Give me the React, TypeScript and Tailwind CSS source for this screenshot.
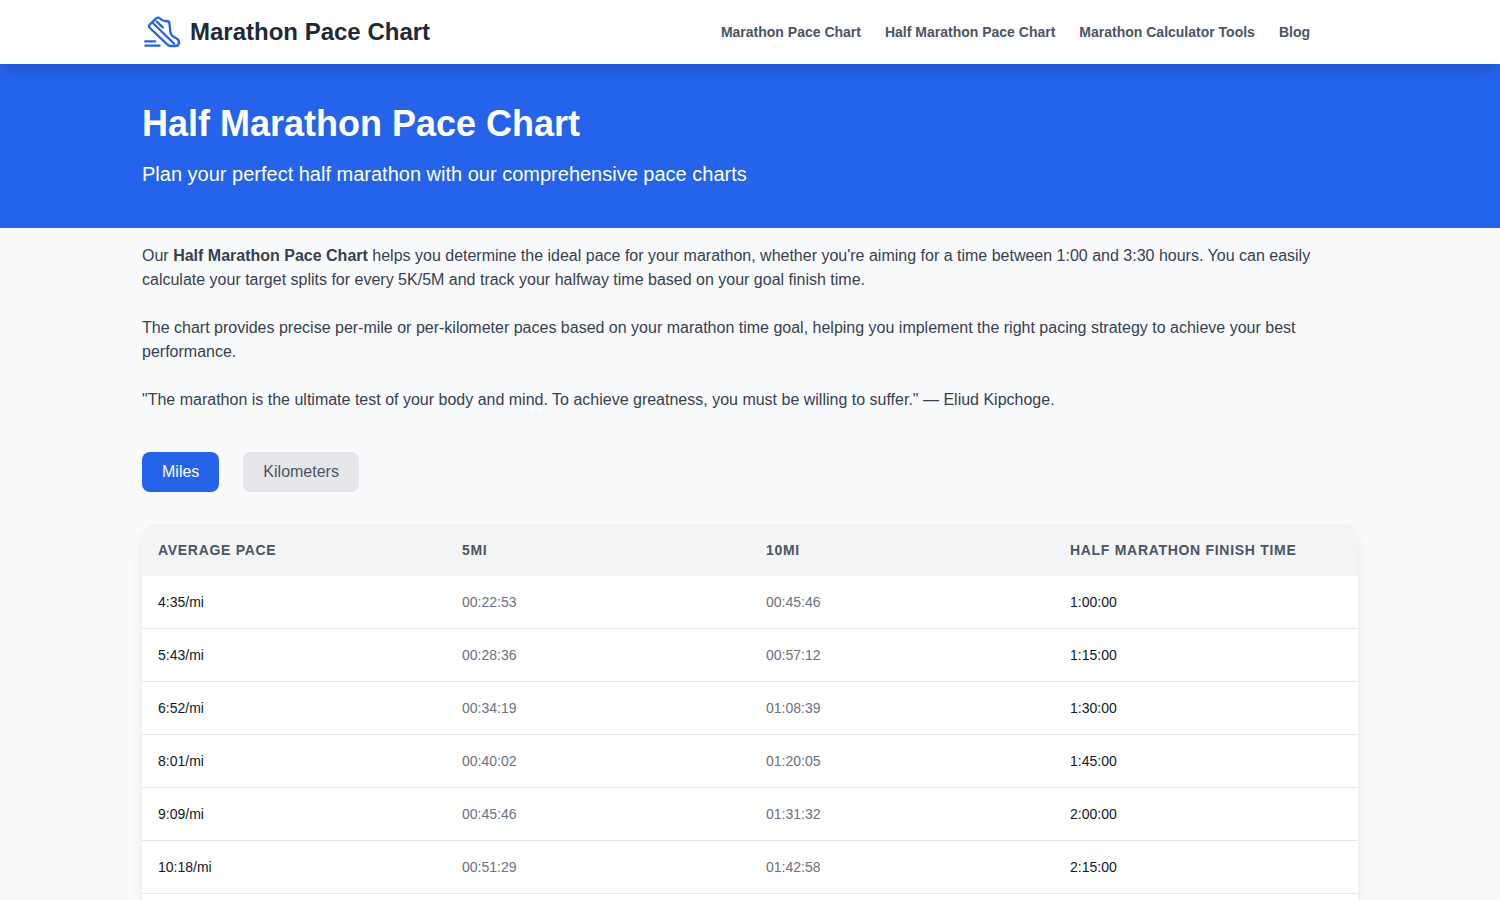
/**
 * Half marathon pace chart page
 *
 * - Site header with logo and navigation
 * - Blue hero banner
 * - Intro copy, unit switch and the pace table
 */

import { useState } from 'react';
import clsx from 'clsx';

type Unit = 'mi' | 'km';

const HALF_MARATHON = { mi: 13.1094, km: 21.0975 };

const SPLITS: Record<Unit, number[]> = {
    mi: [5, 10],
    km: [5, 10, 15, 20],
};

// Goal times from 1:00 to 3:30, one every 15 minutes
const GOAL_MINUTES = [60, 75, 90, 105, 120, 135, 150, 165, 180, 195, 210];

const NAV_LINKS = [
    'Marathon Pace Chart',
    'Half Marathon Pace Chart',
    'Marathon Calculator Tools',
    'Blog',
];

const pad = (n: number) => String(n).padStart(2, '0');

const formatPace = (seconds: number) => {
    const s = Math.round(seconds);
    return `${Math.floor(s / 60)}:${pad(s % 60)}`;
};

const formatSplit = (seconds: number) => {
    const s = Math.floor(seconds);
    return `${pad(Math.floor(s / 3600))}:${pad(Math.floor(s / 60) % 60)}:${pad(s % 60)}`;
};

const formatGoal = (minutes: number) => `${Math.floor(minutes / 60)}:${pad(minutes % 60)}:00`;

const ShoeLogo = () => (
    <svg
        viewBox="0 0 40 40"
        className="h-10 w-10 shrink-0 text-[#2563eb]"
        fill="none"
        stroke="currentColor"
        strokeWidth="2.3"
        strokeLinecap="round"
        strokeLinejoin="round"
        aria-hidden="true"
    >
        {/* Upper and sole */}
        <path d="M7.9 12.4 14.2 6.4C15.4 5.2 17 5.4 18 6.6C19.6 8.5 21.4 9.2 23.8 9C26 8.8 27.3 9.7 27.5 11.8L28.3 19.6C28.6 22 29.8 23.8 31.6 24.8L34.6 26.4C36.4 27.4 37.2 28.8 37 30.8C36.8 32.8 35.3 34 33.2 34H29.4C27.8 34 26.4 33.5 25.2 32.4L7.9 16C6.7 14.9 6.7 13.6 7.9 12.4Z" />
        {/* Midsole and lace */}
        <path d="M10.6 10.8 32.2 31.8" />
        <path d="M14.8 9.6 20.8 15.4" />
        {/* Speed lines */}
        <path d="M3.3 29.4H13.2M3.3 33.6H17.6" />
    </svg>
);

const SiteHeader = () => (
    <header className="relative z-10 bg-white shadow-lg">
        <div className="mx-auto flex h-16 max-w-7xl items-center justify-between px-8">
            <a href="#" className="flex items-center gap-2">
                <ShoeLogo />
                <span className="text-2xl font-bold text-[#1f2937]">Marathon Pace Chart</span>
            </a>
            <nav className="mr-12 flex items-center gap-6">
                {NAV_LINKS.map((label) => (
                    <a key={label} href="#" className="text-sm font-semibold text-[#4b5563] hover:text-[#2563eb]">
                        {label}
                    </a>
                ))}
            </nav>
        </div>
    </header>
);

interface UnitButtonProps {
    active: boolean;
    onClick: () => void;
    children: React.ReactNode;
}

const UnitButton = ({ active, onClick, children }: UnitButtonProps) => (
    <button
        type="button"
        aria-pressed={active}
        onClick={onClick}
        className={clsx(
            'rounded-lg px-5 py-2',
            active ? 'bg-[#2563eb] text-white' : 'bg-[#e5e7eb] text-[#4b5563]'
        )}
    >
        {children}
    </button>
);

const PaceTable = ({ unit }: { unit: Unit }) => (
    <div className="overflow-hidden rounded-xl bg-white shadow-lg">
        <table className="w-full table-fixed text-left text-sm">
            <thead className="bg-[#f3f4f6] tracking-wider text-[#4b5563] uppercase">
                <tr>
                    <th scope="col" className="p-4 font-semibold">Average Pace</th>
                    {SPLITS[unit].map((split) => (
                        <th key={split} scope="col" className="p-4 font-semibold">
                            {`${split}${unit}`}
                        </th>
                    ))}
                    <th scope="col" className="p-4 font-semibold">Half Marathon Finish Time</th>
                </tr>
            </thead>
            <tbody>
                {GOAL_MINUTES.map((minutes) => {
                    const pace = (minutes * 60) / HALF_MARATHON[unit];
                    return (
                        <tr key={minutes} className="border-b border-[#e5e7eb]">
                            <td className="p-4 text-[#111827]">{`${formatPace(pace)}/${unit}`}</td>
                            {SPLITS[unit].map((split) => (
                                <td key={split} className="p-4 text-[#6b7280]">{formatSplit(pace * split)}</td>
                            ))}
                            <td className="p-4 text-[#111827]">{formatGoal(minutes)}</td>
                        </tr>
                    );
                })}
            </tbody>
        </table>
    </div>
);

export default function App() {
    const [unit, setUnit] = useState<Unit>('mi');

    return (
        <div className="min-h-screen bg-[#f9fafb] font-['Liberation_Sans',Arial,sans-serif]">
            <SiteHeader />

            <section className="bg-[#2563eb] text-white">
                <div className="mx-auto max-w-7xl px-8 py-10">
                    <h1 className="mb-4 text-4xl font-bold">Half Marathon Pace Chart</h1>
                    <p className="text-xl">Plan your perfect half marathon with our comprehensive pace charts</p>
                </div>
            </section>

            <main className="mx-auto max-w-7xl px-8 pt-4 pb-12">
                <div className="space-y-6 text-[#374151]">
                    <p>
                        Our <strong>Half Marathon Pace Chart</strong> helps you determine the ideal pace for your
                        marathon, whether you're aiming for a time between 1:00 and 3:30 hours. You can easily
                        calculate your target splits for every 5K/5M and track your halfway time based on your goal
                        finish time.
                    </p>
                    <p>
                        The chart provides precise per-mile or per-kilometer paces based on your marathon time goal,
                        helping you implement the right pacing strategy to achieve your best performance.
                    </p>
                    <p>
                        "The marathon is the ultimate test of your body and mind. To achieve greatness, you must be
                        willing to suffer." — Eliud Kipchoge.
                    </p>
                </div>

                <div className="mt-10 mb-8 flex gap-6">
                    <UnitButton active={unit === 'mi'} onClick={() => setUnit('mi')}>Miles</UnitButton>
                    <UnitButton active={unit === 'km'} onClick={() => setUnit('km')}>Kilometers</UnitButton>
                </div>

                <PaceTable unit={unit} />
            </main>
        </div>
    );
}
